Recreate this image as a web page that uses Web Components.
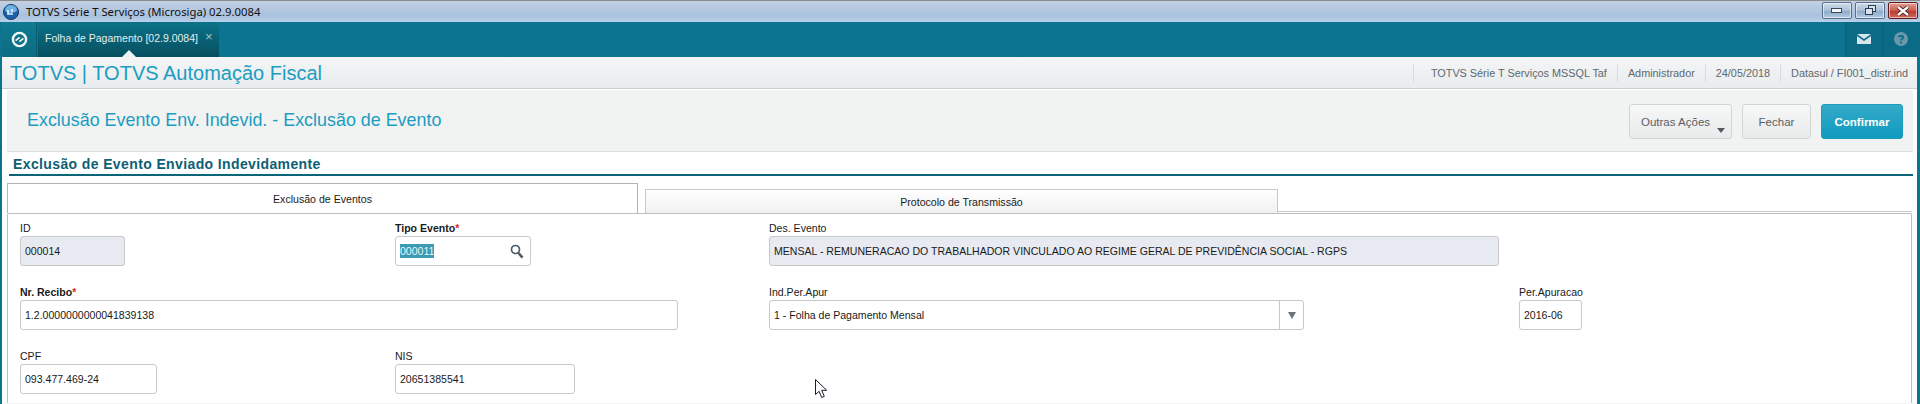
<!DOCTYPE html>
<html lang="pt-BR">
<head>
<meta charset="utf-8">
<title>TOTVS Automação Fiscal</title>
<style>
  html, body { margin: 0; height: 404px; overflow: hidden; background: #fff; }
  body { display: flex; flex-direction: column; font-family: "Liberation Sans", Arial, sans-serif; }
</style>
</head>
<body>
<win-titlebar>TOTVS Série T Serviços (Microsiga) 02.9.0084</win-titlebar>
<app-tabbar>Folha de Pagamento [02.9.0084]</app-tabbar>
<app-shell>
  <app-header>
    TOTVS | TOTVS Automação Fiscal
    <span slot="info">TOTVS Série T Serviços MSSQL Taf</span>
    <span slot="info">Administrador</span>
    <span slot="info">24/05/2018</span>
    <span slot="info">Datasul / FI001_distr.ind</span>
  </app-header>
  <page-head>
    Exclusão Evento Env. Indevid. - Exclusão de Evento
    <ui-button slot="actions" kind="menu">Outras Ações</ui-button>
    <ui-button slot="actions" style="width:69px">Fechar</ui-button>
    <ui-button slot="actions" kind="primary" style="width:82px">Confirmar</ui-button>
  </page-head>
  <section-title>Exclusão de Evento Enviado Indevidamente</section-title>
  <tab-strip active="Exclusão de Eventos" other="Protocolo de Transmissão"></tab-strip>
  <form-panel>
    <form-field label="ID" readonly width="105" value="000014"></form-field>
    <form-field label="Tipo Evento" required width="136" value="000011" selected search></form-field>
    <form-field label="Des. Evento" readonly width="730" value="MENSAL - REMUNERACAO DO TRABALHADOR VINCULADO AO REGIME GERAL DE PREVIDÊNCIA SOCIAL - RGPS" style="grid-column: 3 / 5"></form-field>
    <form-field label="Nr. Recibo" required width="658" value="1.2.0000000000041839138" style="grid-column: 1 / 3"></form-field>
    <form-field label="Ind.Per.Apur" width="535" value="1 - Folha de Pagamento Mensal" combo></form-field>
    <form-field label="Per.Apuracao" width="63" value="2016-06"></form-field>
    <form-field label="CPF" width="137" value="093.477.469-24"></form-field>
    <form-field label="NIS" width="180" value="20651385541"></form-field>
  </form-panel>
</app-shell>
<mouse-pointer></mouse-pointer>

<script>
class WinTitlebar extends HTMLElement {
    constructor(){
        super();
        this.attachShadow({mode: 'open'});
        this.shadowRoot.innerHTML = `
            <style>
                :host {
                    display: flex;
                    align-items: center;
                    height: 21px;
                    flex: none;
                    border-top: 1px solid #8b8b8b;
                    background: linear-gradient(#c2d0e2, #a9c1de 70%, #b9d0ea);
                    font: 11.3px "Noto Sans", sans-serif;
                    color: #111;
                }
                svg { display: block; }
                .logo { margin: 0 7px 0 3px; }
                .title { flex: 1; }
                .ctl {
                    width: 28px; height: 15px; margin-right: 3px;
                    margin-top: -2px;
                    border: 1px solid #59708c;
                    border-radius: 2px;
                    box-shadow: inset 0 0 0 1px rgba(255,255,255,.55);
                    background: linear-gradient(#cfdced, #a9bfd9 50%, #8ba8c8 52%, #b4cbe2);
                    display: flex; align-items: center; justify-content: center;
                }
                .close {
                    border-color: #5e1d1d; margin-right: 2px;
                    background: linear-gradient(#e4a195, #ca5b4d 50%, #b53a2c 52%, #d0695c);
                }
            </style>
            <svg class="logo" width="16" height="18" viewBox="0 0 16 18">
                <circle cx="8" cy="9" r="7.5" fill="#1d5fa6"/>
                <circle cx="8" cy="9" r="7.5" fill="none" stroke="#163a66"/>
                <path d="M2 7a6 5 0 0 1 12 0a6 3 0 0 1-12 0" fill="#6db1e4"/>
                <path d="M5 7v4h5M9 6v3" stroke="#e6f3fc" stroke-width="1.6" fill="none"/>
            </svg>
            <span class="title"><slot></slot></span>
            <span class="ctl"><svg width="12" height="6"><rect x=".5" y=".5" width="10" height="4" fill="#f4f7fa" stroke="#3a4a5c"/></svg></span>
            <span class="ctl"><svg width="13" height="11" fill="#d8e3ef" stroke="#2d3d50"><rect x="4.5" y=".5" width="7" height="6"/><rect x="1.5" y="3.5" width="7" height="6"/></svg></span>
            <span class="ctl close"><svg width="14" height="10"><path d="M2 1l10 8M12 1L2 9" stroke="#3c1513" stroke-width="4"/><path d="M2 1l10 8M12 1L2 9" stroke="#fff" stroke-width="2.4"/></svg></span>
        `;
    }
}

class AppTabbar extends HTMLElement {
    constructor(){
        super();
        this.attachShadow({mode: 'open'});
        this.shadowRoot.innerHTML = `
            <style>
                :host {
                    display: flex;
                    height: 35px;
                    flex: none;
                    background: #0c7391;
                    font-size: 10.5px;
                    color: #e4eef2;
                }
                .home {
                    width: 35px; margin-left: 2px;
                    border-right: 1px solid #0a5c70;
                    background: linear-gradient(#0f7a90, #0c6c82);
                    display: flex; align-items: center; justify-content: center;
                    box-sizing: border-box; padding-bottom: 1px;
                }
                .tab {
                    position: relative;
                    width: 181px; box-sizing: border-box; margin-left: 1px;
                    background: linear-gradient(#0c7288, #064f5f);
                    display: flex; align-items: center; padding: 0 0 3px 7px;
                    white-space: nowrap;
                }
                .tab i {
                    font-style: normal; margin-left: 7px; margin-top: -3px;
                    color: #a5c4ce; font-size: 13px;
                }
                .tab::after {
                    content: ""; position: absolute; left: 84px; bottom: 0;
                    border: 7px solid transparent; border-top: 0;
                    border-bottom: 7px solid #f0f3f4;
                }
                .fill { flex: 1; }
                .cell {
                    width: 37px; box-sizing: border-box;
                    border-left: 1px solid #0a6277;
                    background: #0b6a85;
                    display: flex; align-items: center; justify-content: center;
                    padding-bottom: 1px;
                }
                .help { width: 38px; }
                .help svg { margin-right: 2px; }
            </style>
            <div class="home">
                <svg width="17" height="17" viewBox="0 0 17 17" fill="none" stroke="#f2f7f8" stroke-width="2.4">
                    <circle cx="8.5" cy="8.5" r="6.6"/>
                    <path d="M4.6 9.6 8.6 6.4 M8.4 10.6 12.4 7.4" stroke-width="1.8"/>
                </svg>
            </div>
            <div class="tab"><slot></slot><i>×</i></div>
            <div class="fill"></div>
            <div class="cell mail">
                <svg width="14" height="10" viewBox="0 0 14 10">
                    <path d="M0 0h14L7 5z" fill="#d6e6ec"/>
                    <path d="M0 2l7 5 7-5v8H0z" fill="#d6e6ec"/>
                </svg>
            </div>
            <div class="cell help">
                <svg width="14" height="14" viewBox="0 0 14 14">
                    <circle cx="7" cy="7" r="7" fill="#6a97aa"/>
                    <path d="M4.8 5.2C5 3.4 9.2 3.3 9.2 5.4 9.2 7 7 6.8 7 8.6" fill="none" stroke="#0b6a85" stroke-width="1.7"/>
                    <rect x="6.1" y="9.6" width="1.8" height="1.8" fill="#0b6a85"/>
                </svg>
            </div>
        `;
    }
}

class AppShell extends HTMLElement {
    constructor(){
        super();
        this.attachShadow({mode: 'open'});
        this.shadowRoot.innerHTML = `
            <style>
                :host {
                    display: flex;
                    flex-direction: column;
                    flex: 1;
                    min-height: 0;
                    border-left: 2px solid #0c7391;
                    border-right: 3px solid #0c7391;
                    background: #fff;
                }
                .foot { flex: none; height: 1px; background: #f4f6f6; }
            </style>
            <slot></slot>
            <div class="foot"></div>
        `;
    }
}

class AppHeader extends HTMLElement {
    constructor(){
        super();
        this.attachShadow({mode: 'open'});
        this.shadowRoot.innerHTML = `
            <style>
                :host {
                    display: flex;
                    align-items: center;
                    justify-content: space-between;
                    flex: none;
                    height: 31px;
                    padding-left: 8px;
                    border-bottom: 1px solid #c9ced1;
                    background: linear-gradient(#f3f5f6, #e9ecee);
                }
                .brand { font-size: 20px; color: #1c9cc1; white-space: nowrap; padding-top: 2px; }
                .info { display: flex; font-size: 10.85px; color: #5f686e; }
                ::slotted(span) {
                    border-left: 1px solid #d7dbdd;
                    padding: 0 10px;
                    line-height: 18px;
                    white-space: nowrap;
                }
                ::slotted(span:first-of-type) { padding-left: 17px; }
                ::slotted(span:last-of-type) { padding-right: 9px; }
            </style>
            <span class="brand"><slot></slot></span>
            <div class="info"><slot name="info"></slot></div>
        `;
    }
}

class PageHead extends HTMLElement {
    constructor(){
        super();
        this.attachShadow({mode: 'open'});
        this.shadowRoot.innerHTML = `
            <style>
                :host {
                    display: flex;
                    align-items: center;
                    justify-content: space-between;
                    flex: none;
                    height: 61px;
                    margin: 1px 4px 0 5px;
                    padding: 0 10px 0 20px;
                    border-bottom: 1px solid #dcdfe1;
                    border-radius: 3px 3px 0 0;
                    background: #f1f3f3;
                }
                .name { font-size: 17.9px; color: #1c9cc1; white-space: nowrap; padding-bottom: 1px; }
                .actions { display: flex; gap: 10px; padding-top: 2px; }
            </style>
            <span class="name"><slot></slot></span>
            <div class="actions"><slot name="actions"></slot></div>
        `;
    }
}

class UiButton extends HTMLElement {
    constructor(){
        super();
        this.attachShadow({mode: 'open'});
        this.shadowRoot.innerHTML = `
            <style>
                :host {
                    display: flex;
                    position: relative;
                    align-items: center;
                    justify-content: center;
                    box-sizing: border-box;
                    height: 35px;
                    font-size: 11.5px;
                    color: #585f66;
                    border: 1px solid #d2d5d7;
                    border-radius: 3px;
                    background: linear-gradient(#f6f7f7, #e9eaeb);
                    white-space: nowrap;
                }
                :host([kind="menu"]) { width: 103px; justify-content: flex-start; padding-left: 11px; }
                :host([kind="menu"])::after {
                    content: ""; position: absolute; right: 6px; bottom: 5px;
                    border: 4.5px solid transparent; border-bottom: 0;
                    border-top: 5px solid #555b62;
                }
                :host([kind="primary"]) {
                    color: #fff; font-weight: bold; border-color: #1b9cbd;
                    background: linear-gradient(#35a9c8, #0f9bbf);
                }
            </style>
            <slot></slot>
        `;
    }
}

class SectionTitle extends HTMLElement {
    constructor(){
        super();
        this.attachShadow({mode: 'open'});
        this.shadowRoot.innerHTML = `
            <style>
                :host {
                    display: block;
                    flex: none;
                    height: 20px;
                    margin: 2px 4px 0 7px;
                    padding: 0 0 0 4px;
                    border-bottom: 2px solid #0b6478;
                    font-size: 14px;
                    line-height: 20px;
                    font-weight: bold;
                    color: #0d5f75;
                    letter-spacing: .38px;
                    white-space: nowrap;
                }
            </style>
            <slot></slot>
        `;
    }
}

class TabStrip extends HTMLElement {
    constructor(){
        super();
        this.attachShadow({mode: 'open'});
        this.shadowRoot.innerHTML = `
            <style>
                :host {
                    display: flex;
                    align-items: flex-end;
                    flex: none;
                    height: 30px;
                    margin: 7px 5px 0 5px;
                    font-size: 10.6px;
                    color: #1a1a1a;
                }
                .tab {
                    display: flex; align-items: center; justify-content: center;
                    box-sizing: border-box; white-space: nowrap;
                    border: 1px solid #b4b4b4; border-bottom: 0;
                }
                .on { width: 631px; height: 30px; background: #fff; }
                .off {
                    width: 633px; height: 24px; margin-left: 7px;
                    border-color: #c9c9c9;
                    background: linear-gradient(#fff, #f0f0f0);
                }
                .rest { flex: 1; height: 2px; border-top: 1px solid #c9c9c9; box-sizing: border-box; }
            </style>
            <div class="tab on"></div>
            <div class="tab off"></div>
            <div class="rest"></div>
        `;
    }
    connectedCallback(){
        this.shadowRoot.querySelector('.on').textContent = this.getAttribute('active');
        this.shadowRoot.querySelector('.off').textContent = this.getAttribute('other');
    }
}

class FormPanel extends HTMLElement {
    constructor(){
        super();
        this.attachShadow({mode: 'open'});
        this.shadowRoot.innerHTML = `
            <style>
                :host {
                    display: grid;
                    grid-template-columns: 375px 374px 750px 1fr;
                    grid-auto-rows: 44px;
                    row-gap: 20px;
                    align-content: start;
                    flex: 1;
                    min-height: 0;
                    margin: 0 5px;
                    padding: 8px 0 0 12px;
                    border: 1px solid #bdbdbd;
                    border-bottom: 0;
                    border-radius: 2px 2px 0 0;
                    background: #fff;
                }
            </style>
            <slot></slot>
        `;
    }
}

class FormField extends HTMLElement {
    constructor(){
        super();
        this.attachShadow({mode: 'open'});
        this.shadowRoot.innerHTML = `
            <style>
                :host {
                    display: block;
                    font-size: 10.55px;
                    color: #1a1a1a;
                }
                .lbl { height: 14px; line-height: 13px; white-space: nowrap; }
                :host([required]) .lbl { font-weight: bold; }
                .req { color: #d8232a; }
                .box {
                    display: flex; align-items: center;
                    box-sizing: border-box;
                    height: 30px;
                    padding-left: 4px;
                    border: 1px solid #c8c8c8;
                    border-radius: 3px;
                    background: #fff;
                    white-space: nowrap;
                }
                :host([readonly]) .box { background: #e7eaf0; }
                .val { flex: 1; }
                .sel { background: #3b9bb5; color: #e8f4f7; padding: 1px 0; }
                svg { display: block; flex: none; }
                .mag { margin-right: 6px; }
                .arrow {
                    flex: none; width: 23px; height: 100%;
                    border-left: 1px solid #c8c8c8;
                    display: flex; align-items: center; justify-content: center;
                }
            </style>
            <div class="lbl"></div>
            <div class="box"><span class="val"></span></div>
        `;
    }
    connectedCallback(){
        const root = this.shadowRoot;
        const lbl = root.querySelector('.lbl');
        const box = root.querySelector('.box');
        const val = root.querySelector('.val');
        lbl.textContent = this.getAttribute('label');
        if(this.hasAttribute('required')){
            const star = document.createElement('span');
            star.className = 'req';
            star.textContent = '*';
            lbl.appendChild(star);
        }
        box.style.width = this.getAttribute('width') + 'px';
        if(this.hasAttribute('selected')){
            val.innerHTML = '<span class="sel"></span>';
            val.firstChild.textContent = this.getAttribute('value');
        } else {
            val.textContent = this.getAttribute('value');
        }
        if(this.hasAttribute('search')){
            box.insertAdjacentHTML('beforeend', `<svg class="mag" width="14" height="15" viewBox="0 0 14 15" fill="none" stroke="#4a5a66">
                <circle cx="5.5" cy="5.5" r="4" stroke-width="1.7"/><path d="M8.5 9l4 4.6" stroke-width="2.6"/></svg>`);
        }
        if(this.hasAttribute('combo')){
            box.insertAdjacentHTML('beforeend', `<span class="arrow"><svg width="8" height="7"><path d="M0 0h8L4 7z" fill="#6a7178"/></svg></span>`);
        }
    }
}

class MousePointer extends HTMLElement {
    constructor(){
        super();
        this.attachShadow({mode: 'open'});
        this.shadowRoot.innerHTML = `
            <style>
                :host { position: absolute; left: 815px; top: 379px; width: 13px; height: 20px; }
                svg { display: block; }
            </style>
            <svg width="13" height="20" viewBox="0 0 13 20">
                <path d="M.5.5v15l3.6-3.2 2.6 6.2 2.6-1.1-2.6-6.1h5z" fill="#fff" stroke="#1b1b2a"/>
            </svg>
        `;
    }
}

customElements.define('win-titlebar', WinTitlebar);
customElements.define('app-tabbar', AppTabbar);
customElements.define('app-shell', AppShell);
customElements.define('app-header', AppHeader);
customElements.define('page-head', PageHead);
customElements.define('ui-button', UiButton);
customElements.define('section-title', SectionTitle);
customElements.define('tab-strip', TabStrip);
customElements.define('form-panel', FormPanel);
customElements.define('form-field', FormField);
customElements.define('mouse-pointer', MousePointer);
</script>
</body>
</html>
